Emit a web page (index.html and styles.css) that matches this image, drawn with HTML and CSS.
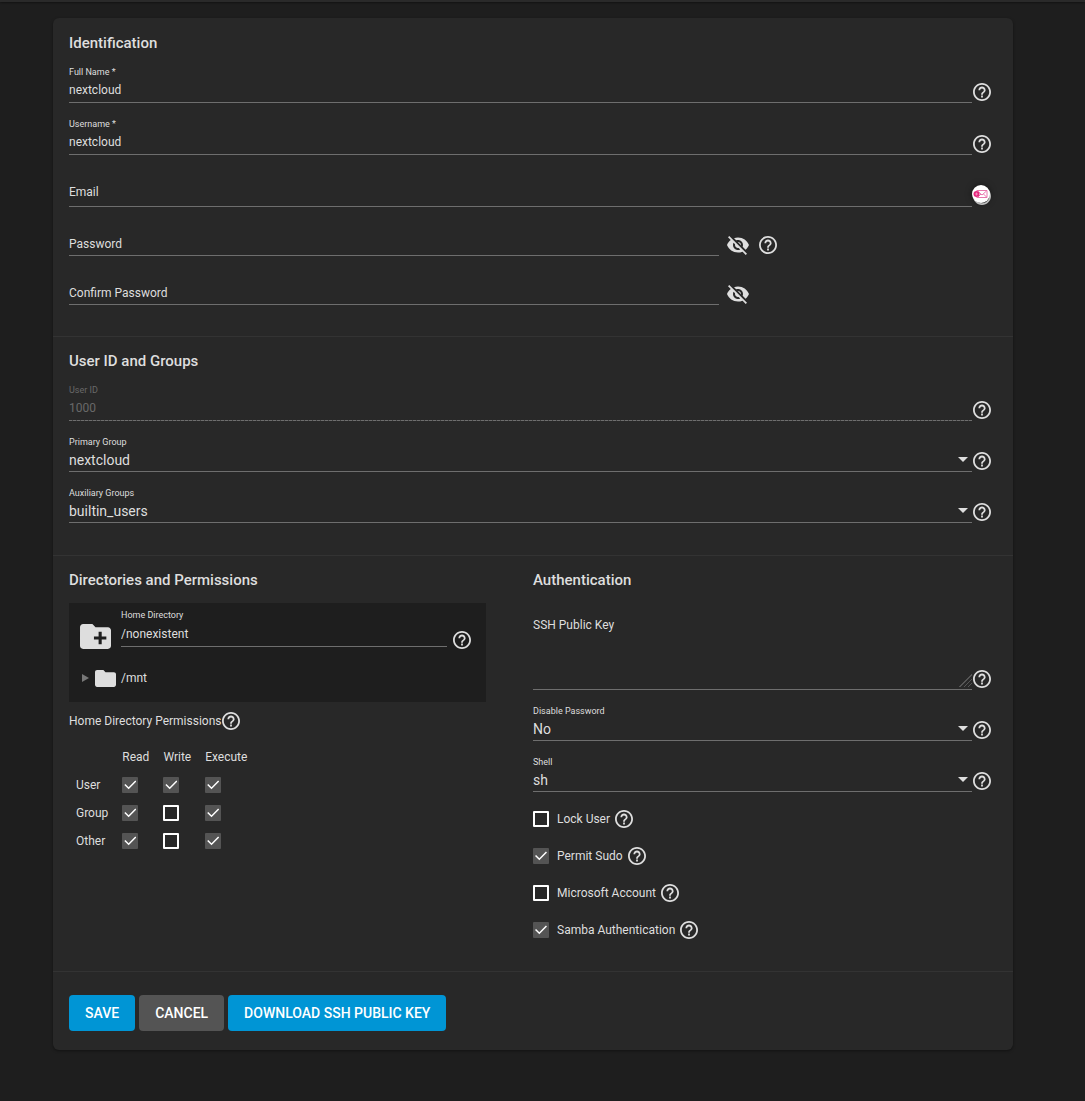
FILE: index.html
```html
<!DOCTYPE html>
<html lang="en">
<head>
<meta charset="utf-8">
<meta name="viewport" content="width=device-width, initial-scale=1">
<title>Edit User</title>
<link rel="stylesheet" href="styles.css">
</head>
<body>
<svg class="sprite" aria-hidden="true">
  <symbol id="help" viewBox="2 2 20 20"><path d="M11 18h2v-2h-2v2zm1-16C6.48 2 2 6.48 2 12s4.48 10 10 10 10-4.48 10-10S17.52 2 12 2zm0 18c-4.41 0-8-3.59-8-8s3.59-8 8-8 8 3.59 8 8-3.59 8-8 8zm0-14c-2.21 0-4 1.79-4 4h2c0-1.1.9-2 2-2s2 .9 2 2c0 2-3 1.75-3 5h2c0-2.25 3-2.5 3-5 0-2.21-1.79-4-4-4z"/></symbol>
  <symbol id="eye-off" viewBox="1 2 22 20"><path d="M12 7c2.76 0 5 2.24 5 5 0 .65-.13 1.26-.36 1.83l2.92 2.92c1.51-1.26 2.7-2.89 3.43-4.75-1.73-4.39-6-7.5-11-7.5-1.4 0-2.74.25-3.98.7l2.16 2.16C10.74 7.13 11.35 7 12 7zM2 4.27l2.28 2.28.46.46C3.08 8.3 1.78 10.02 1 12c1.73 4.39 6 7.5 11 7.5 1.55 0 3.03-.3 4.38-.84l.42.42L19.73 22 21 20.73 3.27 3 2 4.27zM7.53 9.8l1.55 1.55c-.05.21-.08.43-.08.65 0 1.66 1.34 3 3 3 .22 0 .44-.03.65-.08l1.55 1.55c-.67.33-1.41.53-2.2.53-2.76 0-5-2.24-5-5 0-.79.2-1.53.53-2.2zm4.31-.78l3.15 3.15.02-.16c0-1.66-1.34-3-3-3l-.17.01z"/></symbol>
  <symbol id="arrow" viewBox="0 0 10 5"><path d="M0 0h10L5 5z"/></symbol>
</svg>

<div class="topbar"></div>
<main class="page">
  <form class="card">
    <section class="section">
      <h2 class="title">Identification</h2>
      <div class="fields">
        <div class="row">
          <div class="field">
            <label for="full-name">Full Name *</label>
            <input id="full-name" type="text" value="nextcloud">
          </div>
          <button class="help" type="button" aria-label="Help"><svg><use href="#help"/></svg></button>
        </div>
        <div class="row">
          <div class="field">
            <label for="username">Username *</label>
            <input id="username" type="text" value="nextcloud">
          </div>
          <button class="help" type="button" aria-label="Help"><svg><use href="#help"/></svg></button>
        </div>
        <div class="row">
          <div class="field field-empty">
            <label for="email">Email</label>
            <input id="email" type="email">
          </div>
          <button class="help" type="button" aria-label="Help"><svg><use href="#help"/></svg>
            <span class="mail-badge"><svg viewBox="0 0 18 18"><path d="M4.500 5.500h10.500v7H4.500M5.500 6l4.500 4 4.500-4M14.500 12l-3-3M6 12l3-3" fill="none" stroke="#e568a5" stroke-width=".9"/><circle cx="4.500" cy="9" r="3" fill="#e5277d"/><path d="M3 9h3M4.500 7.500v3" stroke="#f6a3cb" stroke-width=".7"/></svg></span>
          </button>
        </div>
        <div class="row row-password">
          <div class="field field-empty">
            <label for="password">Password</label>
            <input id="password" type="password">
          </div>
          <button class="eye" type="button" aria-label="Show password"><svg><use href="#eye-off"/></svg></button>
          <button class="help" type="button" aria-label="Help"><svg><use href="#help"/></svg></button>
        </div>
        <div class="row row-password">
          <div class="field field-empty">
            <label for="confirm">Confirm Password</label>
            <input id="confirm" type="password">
          </div>
          <button class="eye" type="button" aria-label="Show password"><svg><use href="#eye-off"/></svg></button>
        </div>
      </div>
    </section>

    <section class="section section-groups">
      <h2 class="title">User ID and Groups</h2>
      <div class="fields">
        <div class="row">
          <div class="field field-disabled">
            <label for="uid">User ID</label>
            <input id="uid" type="text" value="1000" disabled>
          </div>
          <button class="help" type="button" aria-label="Help"><svg><use href="#help"/></svg></button>
        </div>
        <div class="row">
          <div class="field">
            <label for="primary">Primary Group</label>
            <div class="select"><select id="primary"><option>nextcloud</option></select><svg><use href="#arrow"/></svg></div>
          </div>
          <button class="help" type="button" aria-label="Help"><svg><use href="#help"/></svg></button>
        </div>
        <div class="row">
          <div class="field">
            <label for="auxiliary">Auxiliary Groups</label>
            <div class="select"><select id="auxiliary"><option>builtin_users</option></select><svg><use href="#arrow"/></svg></div>
          </div>
          <button class="help" type="button" aria-label="Help"><svg><use href="#help"/></svg></button>
        </div>
      </div>
    </section>

    <div class="section columns">
      <section class="directories">
        <h2 class="title">Directories and Permissions</h2>
        <div class="explorer">
          <div class="explorer-path">
            <button class="folder-add" type="button" aria-label="Add folder"><svg viewBox="2 4 20 16"><path d="M20 6h-8l-2-2H4c-1.110 0-1.990.890-1.990 2L2 18c0 1.110.890 2 2 2h16c1.110 0 2-.890 2-2V8c0-1.110-.890-2-2-2zm-1 8h-3v3h-2v-3h-3v-2h3V9h2v3h3v2z"/></svg></button>
            <div class="field">
              <label for="home">Home Directory</label>
              <input id="home" type="text" value="/nonexistent">
            </div>
            <button class="help" type="button" aria-label="Help"><svg><use href="#help"/></svg></button>
          </div>
          <div class="tree">
            <svg class="toggle" viewBox="0 0 7 8"><path d="M0 0l7 4-7 4z"/></svg>
            <svg class="folder" viewBox="2 4 20 16"><path d="M10 4H4c-1.100 0-1.990.900-1.990 2L2 18c0 1.100.900 2 2 2h16c1.100 0 2-.900 2-2V8c0-1.100-.900-2-2-2h-8l-2-2z"/></svg>
            <span>/mnt</span>
          </div>
        </div>
        <div class="permissions-title">
          <span id="perm-title">Home Directory Permissions</span>
          <button class="help" type="button" aria-label="Help"><svg><use href="#help"/></svg></button>
        </div>
        <table class="permissions" aria-labelledby="perm-title">
          <thead><tr><td></td><th scope="col">Read</th><th scope="col">Write</th><th scope="col">Execute</th></tr></thead>
          <tbody>
            <tr><th scope="row">User</th><td><input type="checkbox" aria-label="User read" checked></td><td><input type="checkbox" aria-label="User write" checked></td><td><input type="checkbox" aria-label="User execute" checked></td></tr>
            <tr><th scope="row">Group</th><td><input type="checkbox" aria-label="Group read" checked></td><td><input type="checkbox" aria-label="Group write"></td><td><input type="checkbox" aria-label="Group execute" checked></td></tr>
            <tr><th scope="row">Other</th><td><input type="checkbox" aria-label="Other read" checked></td><td><input type="checkbox" aria-label="Other write"></td><td><input type="checkbox" aria-label="Other execute" checked></td></tr>
          </tbody>
        </table>
      </section>

      <section>
        <h2 class="title">Authentication</h2>
        <div class="fields">
          <div class="row">
            <div class="field field-empty field-area">
              <label for="ssh">SSH Public Key</label>
              <textarea id="ssh"></textarea>
            </div>
            <button class="help" type="button" aria-label="Help"><svg><use href="#help"/></svg></button>
          </div>
          <div class="row">
            <div class="field">
              <label for="disable">Disable Password</label>
              <div class="select"><select id="disable"><option>No</option></select><svg><use href="#arrow"/></svg></div>
            </div>
            <button class="help" type="button" aria-label="Help"><svg><use href="#help"/></svg></button>
          </div>
          <div class="row">
            <div class="field">
              <label for="shell">Shell</label>
              <div class="select"><select id="shell"><option>sh</option></select><svg><use href="#arrow"/></svg></div>
            </div>
            <button class="help" type="button" aria-label="Help"><svg><use href="#help"/></svg></button>
          </div>
        </div>
        <div class="checks">
          <div class="check"><label><input type="checkbox">Lock User</label><button class="help" type="button" aria-label="Help"><svg><use href="#help"/></svg></button></div>
          <div class="check"><label><input type="checkbox" checked>Permit Sudo</label><button class="help" type="button" aria-label="Help"><svg><use href="#help"/></svg></button></div>
          <div class="check"><label><input type="checkbox">Microsoft Account</label><button class="help" type="button" aria-label="Help"><svg><use href="#help"/></svg></button></div>
          <div class="check"><label><input type="checkbox" checked>Samba Authentication</label><button class="help" type="button" aria-label="Help"><svg><use href="#help"/></svg></button></div>
        </div>
      </section>
    </div>

    <div class="actions">
      <button class="btn btn-primary" type="submit">SAVE</button>
      <button class="btn" type="button">CANCEL</button>
      <button class="btn btn-primary" type="button">DOWNLOAD SSH PUBLIC KEY</button>
    </div>
  </form>
</main>
</body>
</html>
```
FILE: styles.css
```css
:root {
  --bg: #1e1e1e;
  --card: #282828;
  --text: #dedede;
  --line: #6e6e6e;
  --divider: #333;
  --primary: #0095d5;
  --muted: #545454;
}

* { box-sizing: border-box; }

body {
  margin: 0;
  background: var(--bg);
  color: var(--text);
  font: 12px/18px Roboto, "Liberation Sans", sans-serif;
}

input, select, textarea, button {
  margin: 0;
  padding: 0;
  border: 0;
  border-radius: 0;
  background: none;
  color: inherit;
  font: inherit;
}

svg { display: block; fill: currentColor; }
.sprite { width: 0; height: 0; position: absolute; }

.topbar {
  height: 2px;
  background: #2a2a2a;
  box-shadow: 0 1px 2px rgba(0, 0, 0, .4);
}

.page { padding: 16px 72px 50px 53px; }

.card {
  background: var(--card);
  border-radius: 6px;
  box-shadow: 0 1px 3px rgba(0, 0, 0, .4);
}

.section {
  padding: 15px 16px 31px;
  border-top: 1px solid var(--divider);
}
.section:first-child { border-top-color: transparent; }
.section-groups { padding-bottom: 32px; }

.title {
  margin: 0 0 14px;
  font-size: 15px;
  line-height: 18px;
  font-weight: 500;
}

/* Fields */
.fields { display: flex; flex-direction: column; gap: 15px; }
.row { display: flex; align-items: flex-end; padding-right: 6px; }
.field { flex: 1; min-width: 0; display: grid; }
.field label { font-size: 9px; line-height: 12px; }
.field input {
  width: 100%;
  height: 25px;
  border-bottom: 1px solid var(--line);
  outline: 0;
}

.field-empty label,
.field-empty input,
.field-empty textarea { grid-area: 1 / 1; }
.field-empty label { padding-top: 15px; font-size: 12px; line-height: 14px; }
.field-empty input { height: 37px; padding-top: 12px; }

.field-disabled { color: #686868; }
.field-disabled input {
  border-bottom: 0;
  padding-bottom: 1px;
  background: repeating-linear-gradient(90deg, var(--line) 0 3px, #444 3px 4px) bottom / 100% 1px no-repeat;
}

.field-area { border-bottom: 1px solid var(--line); padding-bottom: 2px; }
.field-area textarea {
  width: 100%;
  height: 84px;
  padding-top: 30px;
  resize: vertical;
  outline: 0;
}
.field-area textarea::-webkit-resizer {
  background: linear-gradient(135deg, var(--card) 50%, transparent 50%),
    repeating-linear-gradient(135deg, #555 0 1px, var(--card) 1px 3px);
}

.select { display: grid; align-items: center; border-bottom: 1px solid var(--line); }
.select select, .select svg { grid-area: 1 / 1; }
.select select {
  width: 100%;
  height: 23px;
  appearance: none;
  font-size: 14px;
  outline: 0;
}
.select option { background: var(--card); }
.select svg {
  justify-self: end;
  width: 10px;
  height: 5px;
  margin-right: 4px;
  pointer-events: none;
}

.row .help { margin: 0 0 2px 1px; }
.help { position: relative; flex: none; cursor: pointer; }
.help svg { width: 18px; height: 18px; }

.mail-badge {
  position: absolute;
  left: -1px;
  top: -2px;
  border-radius: 50%;
  background: #fff;
  box-shadow: 0 0 6px rgba(0, 0, 0, .5);
}

.row-password { padding-right: 0; }
.row-password .field { flex: 0 0 70%; }
.row-password input { height: 34px; }
.row-password .eye { margin: 0 0 1px 8px; }
.row-password .help { margin-left: 10px; }
.eye { cursor: pointer; }
.eye svg { width: 22px; height: 20px; }

/* Directories */
.columns { display: grid; grid-template-columns: 1fr 1fr; }
.directories { padding-right: 47px; }

.explorer { padding: 6px 15px 15px 11px; background: var(--bg); }
.explorer-path { display: flex; align-items: flex-end; }
.explorer .field { margin-bottom: 2px; }
.explorer input { height: 26px; }
.explorer .help { margin-left: 6px; }
.folder-add { margin-right: 10px; cursor: pointer; }
.folder-add svg { width: 31px; height: 25px; }

.tree { display: flex; align-items: center; margin-top: 20px; padding-left: 2px; }
.toggle { width: 7px; height: 8px; margin-right: 6px; fill: #777; }
.folder { width: 21px; height: 17px; margin-right: 5px; }

.permissions-title { display: flex; align-items: center; gap: 1px; margin-top: 10px; }

.permissions { margin-top: 13px; border-collapse: collapse; }
.permissions th, .permissions td { height: 28px; padding: 0 14px 0 0; font-weight: 400; text-align: left; }
.permissions tbody th { padding: 0 14px 0 7px; }

input[type="checkbox"] {
  flex: none;
  display: grid;
  place-items: center;
  width: 16px;
  height: 16px;
  appearance: none;
  border: 2px solid #fff;
  border-radius: 1px;
}
input[type="checkbox"]:checked { border: 0; background: var(--muted); }
input[type="checkbox"]:checked::before {
  content: "";
  width: 12px;
  height: 10px;
  background: #fff;
  clip-path: polygon(0 50%, 9% 40%, 36% 72%, 91% 4%, 100% 14%, 36% 92%);
}

.checks { display: grid; gap: 17px; margin-top: 17px; }
.check { display: flex; align-items: center; gap: 5px; height: 20px; }
.check label { display: flex; align-items: center; gap: 8px; }

/* Actions */
.actions {
  display: flex;
  flex-wrap: wrap;
  gap: 4px;
  padding: 23px 16px 19px;
  border-top: 1px solid var(--divider);
}
.btn {
  height: 36px;
  padding: 0 16px;
  border-radius: 4px;
  background: var(--muted);
  color: #fff;
  font-size: 14px;
  font-weight: 500;
  cursor: pointer;
}
.btn-primary { background: var(--primary); }
```
